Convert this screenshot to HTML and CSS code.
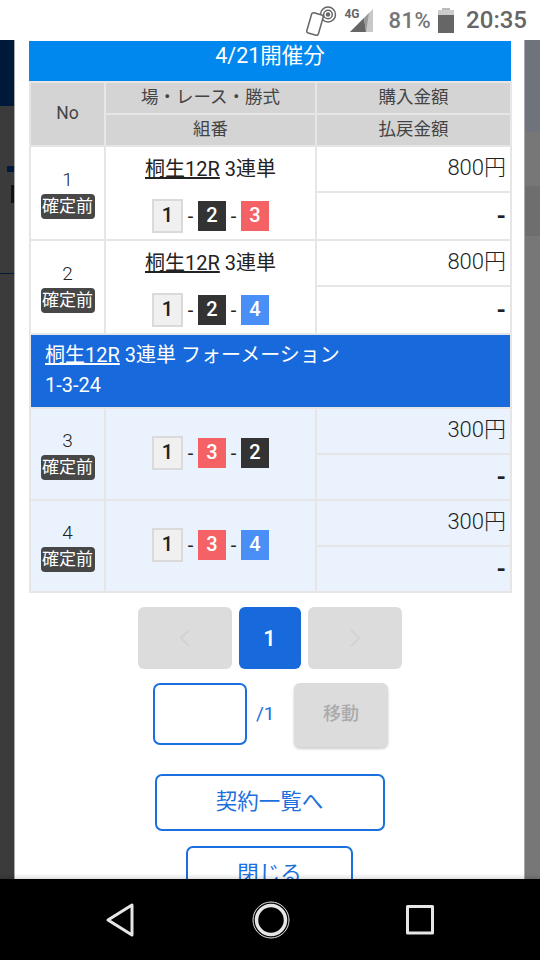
FILE: index.html
```html
<!DOCTYPE html>
<html lang="ja">
<head>
    <meta charset="UTF-8">
    <meta name="viewport" content="width=device-width, initial-scale=1.0">
    <title>4/21開催分</title>
    <link rel="stylesheet" href="styles.css">
</head>
<body>
    <div class="status-bar">
        <svg class="nfc-icon" width="32" height="32" viewBox="0 0 32 32" fill="none" stroke="#666" stroke-width="1.5">
            <circle cx="22" cy="10.500" r="7.500"/>
            <circle cx="22" cy="10.500" r="4.300"/>
            <circle cx="22" cy="10.500" r="1.500" fill="#666"/>
            <rect x="3" y="9.500" width="12" height="21" rx="2" fill="white" transform="rotate(16 9 20)"/>
        </svg>
        <div class="signal">
            <strong class="signal-label">4G</strong>
            <svg class="signal-bars" width="24" height="24" viewBox="0 0 24 24">
                <polygon points="0,23 23,0 23,23" fill="#c8c8c8"/>
                <polygon points="0,23 14,9 16,23" fill="#666"/>
                <polygon points="14,9 19,4 16,23" fill="#999"/>
            </svg>
        </div>
        <span class="battery-text">81%</span>
        <div class="battery">
            <div class="battery-cap"></div>
            <div class="battery-body"><div class="battery-level"></div></div>
        </div>
        <span class="clock">20:35</span>
    </div>

    <div class="stage">
        <div class="side side-left">
            <div class="side-mark"></div>
            <div class="side-glyph"></div>
            <div class="side-line"></div>
        </div>
        <div class="modal">
            <div class="modal-title">4/21開催分</div>
            <table class="bet-table">
                <colgroup>
                    <col class="col-no">
                    <col class="col-race">
                    <col class="col-price">
                </colgroup>
                <tr class="head-row">
                    <th rowspan="2">No</th>
                    <th>場・レース・勝式</th>
                    <th>購入金額</th>
                </tr>
                <tr class="head-row">
                    <th>組番</th>
                    <th>払戻金額</th>
                </tr>

                <tr class="row-top">
                    <td rowspan="2" class="no-cell">
                        <div class="no-num">1</div>
                        <div class="badge">確定前</div>
                    </td>
                    <td rowspan="2" class="race-cell">
                        <div class="race-name"><u>桐生12R</u> 3連単</div>
                        <div class="tiles">
                            <span class="tile tile-white">1</span><span class="dash">-</span><span class="tile tile-black">2</span><span class="dash">-</span><span class="tile tile-red">3</span>
                        </div>
                    </td>
                    <td class="price-cell">800円</td>
                </tr>
                <tr class="row-bottom">
                    <td class="price-cell refund">-</td>
                </tr>

                <tr class="row-top">
                    <td rowspan="2" class="no-cell">
                        <div class="no-num">2</div>
                        <div class="badge">確定前</div>
                    </td>
                    <td rowspan="2" class="race-cell">
                        <div class="race-name"><u>桐生12R</u> 3連単</div>
                        <div class="tiles">
                            <span class="tile tile-white">1</span><span class="dash">-</span><span class="tile tile-black">2</span><span class="dash">-</span><span class="tile tile-blue">4</span>
                        </div>
                    </td>
                    <td class="price-cell">800円</td>
                </tr>
                <tr class="row-bottom">
                    <td class="price-cell refund">-</td>
                </tr>

                <tr class="band-row">
                    <td colspan="3"><u>桐生12R</u> 3連単 フォーメーション<br>1-3-24</td>
                </tr>

                <tr class="row-top tinted">
                    <td rowspan="2" class="no-cell">
                        <div class="no-num">3</div>
                        <div class="badge">確定前</div>
                    </td>
                    <td rowspan="2" class="race-cell">
                        <div class="tiles">
                            <span class="tile tile-white">1</span><span class="dash">-</span><span class="tile tile-red">3</span><span class="dash">-</span><span class="tile tile-black">2</span>
                        </div>
                    </td>
                    <td class="price-cell">300円</td>
                </tr>
                <tr class="row-bottom tinted">
                    <td class="price-cell refund">-</td>
                </tr>

                <tr class="row-top tinted">
                    <td rowspan="2" class="no-cell">
                        <div class="no-num">4</div>
                        <div class="badge">確定前</div>
                    </td>
                    <td rowspan="2" class="race-cell">
                        <div class="tiles">
                            <span class="tile tile-white">1</span><span class="dash">-</span><span class="tile tile-red">3</span><span class="dash">-</span><span class="tile tile-blue">4</span>
                        </div>
                    </td>
                    <td class="price-cell">300円</td>
                </tr>
                <tr class="row-bottom tinted">
                    <td class="price-cell refund">-</td>
                </tr>
            </table>

            <div class="pager">
                <div class="page-btn page-off">
                    <svg width="14" height="20" viewBox="0 0 14 20" fill="none" stroke="#d0d0d0" stroke-width="1.500"><path d="M11 2 3 10l8 8"/></svg>
                </div>
                <div class="page-btn page-current">1</div>
                <div class="page-btn page-off">
                    <svg width="14" height="20" viewBox="0 0 14 20" fill="none" stroke="#d0d0d0" stroke-width="1.500"><path d="M3 2l8 8-8 8"/></svg>
                </div>
            </div>

            <div class="jump">
                <div class="jump-input"></div>
                <span class="jump-total">/1</span>
                <div class="jump-btn">移動</div>
            </div>

            <div class="link-btn link-wide">契約一覧へ</div>
            <div class="link-btn link-narrow">閉じる</div>
        </div>
        <div class="side side-right"></div>
    </div>

    <div class="nav-bar">
        <svg width="30" height="36" viewBox="0 0 30 36" fill="none" stroke="#e6e6e6" stroke-width="3" stroke-linejoin="round"><path d="M27 3v30L3 18z"/></svg>
        <svg width="38" height="38" viewBox="0 0 38 38" fill="none" stroke="#e6e6e6"><circle cx="19" cy="19" r="14.500" stroke-width="3.500"/><circle cx="19" cy="19" r="18" stroke-width="1"/></svg>
        <svg width="28" height="30" viewBox="0 0 28 30" fill="none" stroke="#e6e6e6" stroke-width="3" stroke-linejoin="round"><rect x="1.500" y="1.500" width="25" height="26.500"/></svg>
    </div>
</body>
</html>
```

FILE: styles.css
```css
* {
    box-sizing: border-box;
}

body {
    margin: 0;
    width: 540px;
    height: 960px;
    overflow: hidden;
    display: flex;
    flex-direction: column;
    background-color: white;
    font-family: Roboto, "Noto Sans CJK JP", sans-serif;
    color: #222;
}

/* status bar */
.status-bar {
    height: 40px;
    flex-shrink: 0;
    display: flex;
    align-items: center;
    padding-right: 13px;
    justify-content: flex-end;
    background-color: white;
    color: #757575;
}

.nfc-icon {
    margin-right: 6px;
}

.signal {
    position: relative;
    width: 30px;
    height: 30px;
    margin-right: 14px;
    display: flex;
    align-items: flex-end;
    justify-content: flex-end;
}

.signal-bars {
    margin-bottom: 2px;
}

.signal-label {
    position: absolute;
    top: 2px;
    left: 0;
    font-size: 12px;
    line-height: 14px;
    color: #666;
}

.battery-text {
    font-size: 22px;
    font-weight: 500;
    letter-spacing: 0.5px;
    margin-right: 7px;
}

.battery {
    width: 16px;
    height: 25px;
    margin-right: 12px;
    display: flex;
    flex-direction: column;
    align-items: center;
}

.battery-cap {
    width: 8px;
    height: 2px;
    background-color: #bbb;
}

.battery-body {
    flex: 1;
    width: 100%;
    background-color: #ccc;
    display: flex;
    align-items: flex-end;
}

.battery-level {
    width: 100%;
    height: 74%;
    background-color: #666;
}

.clock {
    font-size: 24px;
    font-weight: 500;
    color: #666;
}

/* page behind the dialog */
.stage {
    flex: 1;
    min-height: 0;
    display: flex;
    overflow: hidden;
}

.side {
    flex-shrink: 0;
    position: relative;
}

.side-left {
    width: 14px;
    background: linear-gradient(#00193a 0, #00193a 66px, #3b3b3b 66px);
}

.side-right {
    width: 15px;
    background: linear-gradient(#6f737b 0, #6f737b 92px, #777 92px, #777 146px, #6e6e6e 146px, #6e6e6e 196px, #777 196px);
}

.side-mark {
    position: absolute;
    top: 126px;
    right: 0;
    width: 7px;
    height: 6px;
    background-color: #00193a;
}

.side-glyph {
    position: absolute;
    top: 145px;
    right: 0;
    width: 3px;
    height: 18px;
    background-color: #111;
}

.side-line {
    position: absolute;
    top: 233px;
    left: 0;
    width: 100%;
    height: 1px;
    background-color: #00193a;
}

/* dialog */
.modal {
    width: 511px;
    flex-shrink: 0;
    padding: 1px 14px 0;
    background-color: white;
    border-left: 1px solid #aaa;
    border-right: 1px solid #aaa;
    overflow: hidden;
}

.modal-title {
    width: 482px;
    height: 40px;
    background-color: #0088ee;
    color: white;
    font-size: 21.500px;
    line-height: 29px;
    text-align: center;
}

.bet-table {
    width: 481px;
    table-layout: fixed;
    border-collapse: collapse;
}

.col-no {
    width: 75px;
}

.col-race {
    width: 211px;
}

.col-price {
    width: 195px;
}

.bet-table th,
.bet-table td {
    border: 2px solid #e6e6e6;
    padding: 0;
}

.bet-table th {
    padding-bottom: 3px;
    background-color: #d4d4d4;
    color: #444;
    font-size: 17.500px;
    font-weight: 400;
    line-height: 24px;
    text-align: center;
}

.head-row {
    height: 32px;
}

.row-top {
    height: 46px;
}

.row-bottom {
    height: 48px;
}

.tinted td {
    background-color: #e9f2fd;
}

.tinted.row-bottom {
    height: 46px;
}

.no-cell {
    text-align: center;
    vertical-align: middle;
}

.no-num {
    font-size: 19px;
    font-weight: 300;
    line-height: 24px;
    margin-top: 1px;
    margin-bottom: 2px;
}

.badge {
    width: 54px;
    height: 25px;
    margin: 0 auto;
    border-radius: 4px;
    background-color: #474747;
    color: white;
    font-size: 17px;
    line-height: 25px;
    text-align: center;
}

.race-cell {
    text-align: center;
    vertical-align: middle;
}

.race-name {
    font-size: 20px;
    line-height: 30px;
    margin-bottom: 14px;
}

.tinted .race-cell {
    padding-bottom: 4px;
}

.tiles {
    height: 34px;
    display: flex;
    justify-content: center;
    align-items: center;
    padding-top: 1px;
}

.tile {
    width: 28px;
    height: 30px;
    color: white;
    font-size: 20px;
    font-weight: 500;
    line-height: 29px;
    text-align: center;
}

.tile-white {
    width: 31px;
    height: 34px;
    color: #222;
    background-color: #f0f0f0;
    border: 2px solid #dadada;
}

.tile-black {
    background-color: #333;
}

.tile-red {
    background-color: #f46265;
}

.tile-blue {
    background-color: #4a8ff5;
}

.dash {
    width: 15px;
    font-size: 20px;
    text-align: center;
}

.price-cell {
    font-size: 22px;
    font-weight: 300;
    line-height: 28px;
    text-align: right;
    vertical-align: middle;
}

.bet-table .price-cell {
    padding-right: 4px;
    padding-bottom: 3px;
}

.bet-table .refund {
    padding-bottom: 0;
    font-size: 24px;
    font-weight: 700;
}

.band-row {
    height: 74px;
}

.bet-table .band-row td {
    padding-left: 14px;
    padding-bottom: 3px;
    background-color: #1769dc;
    color: white;
    font-size: 20px;
    line-height: 30px;
}

/* pagination */
.pager {
    display: flex;
    justify-content: center;
    gap: 7px;
    margin-top: 14px;
}

.page-btn {
    height: 62px;
    border-radius: 6px;
    display: flex;
    align-items: center;
    justify-content: center;
}

.page-off {
    width: 94px;
    background-color: #dcdcdc;
}

.page-current {
    width: 62px;
    background-color: #1769dc;
    color: white;
    font-size: 22px;
    font-weight: 500;
}

.jump {
    display: flex;
    align-items: flex-start;
    margin-top: 14px;
    margin-left: 124px;
}

.jump-input {
    width: 94px;
    height: 62px;
    border: 2px solid #1b6fdf;
    border-radius: 7px;
}

.jump-total {
    width: 47px;
    padding-left: 9px;
    color: #1b6fdf;
    font-size: 19px;
    line-height: 62px;
}

.jump-btn {
    width: 94px;
    height: 64px;
    border-radius: 6px;
    background-color: #dcdcdc;
    box-shadow: 0 2px 3px rgba(0, 0, 0, 0.2);
    color: #aaa;
    font-size: 18px;
    font-weight: 500;
    line-height: 62px;
    text-align: center;
}

.link-btn {
    margin-left: auto;
    margin-right: auto;
    border: 2px solid #1b6fdf;
    border-radius: 7px;
    color: #1b6fdf;
    font-size: 21.500px;
    line-height: 52px;
    text-align: center;
}

.link-wide {
    width: 230px;
    height: 57px;
    margin-top: 27px;
}

.link-narrow {
    width: 167px;
    height: 58px;
    margin-top: 15px;
}

/* navigation bar */
.nav-bar {
    height: 81px;
    flex-shrink: 0;
    position: relative;
    padding: 0 106px 0 105px;
    display: flex;
    align-items: center;
    justify-content: space-between;
    background-color: black;
    box-shadow: 0 -2px 4px rgba(0, 0, 0, 0.15);
}
```
